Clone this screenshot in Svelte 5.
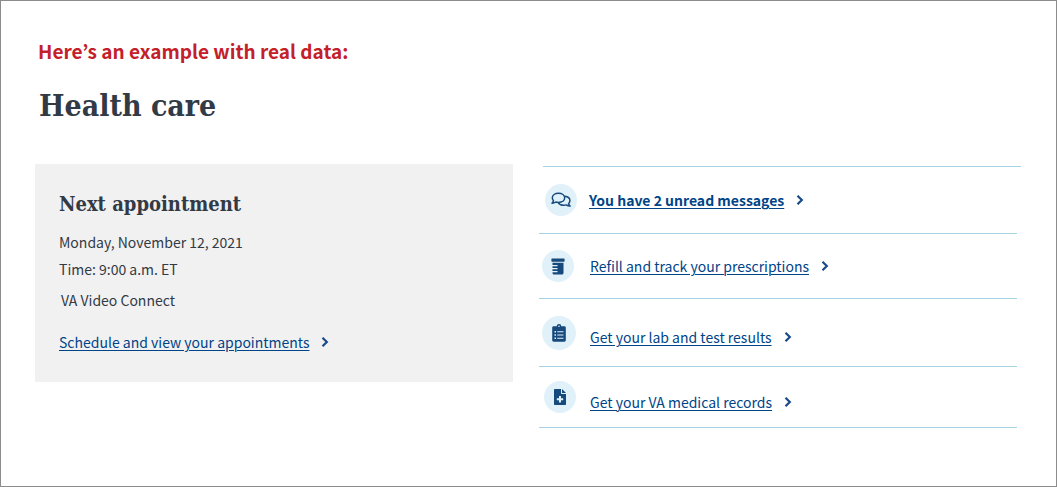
<script>
  const links = [
    { icon: 'messages', label: 'You have 2 unread messages', unread: true },
    { icon: 'prescriptions', label: 'Refill and track your prescriptions' },
    { icon: 'labs', label: 'Get your lab and test results', low: true },
    { icon: 'records', label: 'Get your VA medical records', low: true }
  ];
</script>

{#snippet chevron()}
  <svg class="chevron" viewBox="0 0 8 12" aria-hidden="true">
    <path d="M1.5 1.8 5.8 6 1.5 10.2" fill="none" stroke="currentColor" stroke-width="2.2" />
  </svg>
{/snippet}

<main class="page">
  <p class="intro">Here’s an example with real data:</p>
  <h1>Health care</h1>

  <div class="columns">
    <section class="card">
      <h2>Next appointment</h2>
      <p>Monday, November 12, 2021</p>
      <p>Time: 9:00 a.m. ET</p>
      <p class="place">VA Video Connect</p>
      <div class="action">
        <a href="#appointments">Schedule and view your appointments</a>
        {@render chevron()}
      </div>
    </section>

    <ul class="links">
      {#each links as item}
        <li class={item.icon}>
          <span class="badge">
            {#if item.icon === 'messages'}
              <svg width="20" height="16" viewBox="0 0 20 16" aria-hidden="true">
                <g fill="none" stroke="currentColor" stroke-width="1.5" stroke-linejoin="round">
                  <path d="M7.5 1.2c3.5 0 6.2 2 6.2 4.6s-2.7 4.6-6.2 4.6c-1 0-1.9-.1-2.7-.4-1 .7-2.300 1.100-3.800 1.200.8-.8 1.300-1.600 1.500-2.500-.8-.8-1.200-1.800-1.200-2.900 0-2.600 2.700-4.600 6.200-4.600z" />
                  <path d="M13.8 4.300c3 .3 5.100 2.100 5.100 4.400 0 1.100-.5 2.100-1.300 2.900.2.900.7 1.700 1.500 2.500-1.500-.1-2.800-.5-3.800-1.200-.8.3-1.700.4-2.700.4-2.400 0-4.400-1-5.400-2.700" />
                </g>
              </svg>
            {:else if item.icon === 'prescriptions'}
              <svg width="14" height="17" viewBox="0 0 14 17" aria-hidden="true">
                <path fill="currentColor" d="M1 .5h12c.4 0 .6.2.6.6v2c0 .4-.2.6-.6.6H1c-.4 0-.6-.2-.6-.6v-2C.4.7.6.5 1 .5zM1.500 4.800h11V15c0 .9-.6 1.500-1.500 1.500H3c-.9 0-1.500-.6-1.500-1.500v-.8h5v-1.300h-5v-1.700h5V9.900h-5V8.200h5V6.900h-5z" />
              </svg>
            {:else if item.icon === 'labs'}
              <svg width="14" height="18" viewBox="0 0 14 18" aria-hidden="true">
                <path fill="currentColor" fill-rule="evenodd" d="M1.600 2.300h3.100a2.300 2.300 0 0 1 4.600 0h3.100c.8 0 1.400.6 1.400 1.400v12.600c0 .8-.6 1.400-1.400 1.400H1.600c-.8 0-1.400-.6-1.400-1.400V3.700c0-.8.6-1.400 1.400-1.400zM7 1.500a.8.8 0 1 0 0 1.600.8.8 0 0 0 0-1.600zM2.500 7v1.500H4V7zm2.700.3v1h6.300v-1zM2.500 10.200v1.500H4v-1.500zm2.700.3v1h6.300v-1zM2.500 13.400v1.500H4v-1.500zm2.700.3v1h6.300v-1z" />
              </svg>
            {:else}
              <svg width="12" height="16" viewBox="0 0 12 16" aria-hidden="true">
                <path fill="currentColor" fill-rule="evenodd" d="M.8 0H7v4.200c0 .4.300.8.800.8H12v10.200c0 .5-.3.800-.8.800H.8c-.5 0-.8-.3-.8-.8V.8C0 .3.300 0 .8 0zM5 7v2.200H2.800v2H5v2.200h2v-2.200h2.200v-2H7V7z" />
                <path fill="currentColor" d="M8 0l4 4H8z" />
              </svg>
            {/if}
          </span>
          <span class="text" class:low={item.low}>
            <a href="#{item.icon}" class:unread={item.unread}>{item.label}</a>
            {@render chevron()}
          </span>
        </li>
      {/each}
    </ul>
  </div>
</main>

<style>
  :global(body) {
    margin: 0;
    background: #fff;
  }

  .page {
    box-sizing: border-box;
    min-height: 100vh;
    padding: 36px 39px 32px 34px;
    border: 1px solid #8c8c8c;
    color: #323a45;
    font-family: "Noto Sans CJK KR", "Open Sans", sans-serif;
    font-size: 14px;
    line-height: 24px;
  }

  h1,
  h2,
  p,
  ul {
    margin: 0;
  }

  h1,
  h2 {
    font-family: "DejaVu Serif Condensed", "DejaVu Serif", serif;
    font-weight: 700;
  }

  .intro {
    padding-left: 3px;
    color: #c3202a;
    font-size: 19px;
    font-weight: 700;
    line-height: 28px;
  }

  h1 {
    margin-top: 21px;
    padding-left: 4px;
    font-size: 30px;
    line-height: 40px;
  }

  .columns {
    display: grid;
    grid-template-columns: 1fr 1fr;
    align-items: start;
    gap: 26px;
    margin-top: 38px;
  }

  .card {
    padding: 24px 24px 28px;
    background: #f1f1f1;
  }

  h2 {
    margin-bottom: 10px;
    font-size: 20px;
    line-height: 32px;
  }

  .card p + p {
    margin-top: 3px;
  }

  .card .place {
    margin-top: 7px;
    padding-left: 2px;
  }

  .action {
    display: flex;
    align-items: center;
    gap: 12px;
    margin-top: 18px;
  }

  a {
    color: #004488;
    text-decoration: underline;
    text-decoration-thickness: 1px;
    text-underline-offset: 2px;
  }

  .unread {
    font-weight: 700;
  }

  .chevron {
    flex: none;
    width: 8px;
    height: 12px;
    color: #174a8c;
  }

  .links {
    padding: 2px 0 0;
    list-style: none;
  }

  li {
    display: flex;
    align-items: center;
    gap: 16px;
    box-sizing: border-box;
    min-height: 65px;
    padding-left: 3px;
    border-top: 1px solid #a3d3e4;
  }

  .messages {
    gap: 12px;
    margin: 0 -4px 0 4px;
    padding-left: 2px;
    min-height: 67px;
  }

  .labs {
    min-height: 68px;
    gap: 14px;
  }

  .records {
    min-height: 62px;
    padding-left: 5px;
    gap: 14px;
    border-bottom: 1px solid #a3d3e4;
  }

  .badge {
    display: flex;
    flex: none;
    align-items: center;
    justify-content: center;
    width: 32px;
    height: 32px;
    border-radius: 50%;
    background: #e1f1f9;
    color: #174a7c;
  }

  .labs .badge {
    width: 34px;
    height: 34px;
  }

  .text {
    display: flex;
    align-items: center;
    gap: 12px;
  }

  .low {
    padding-top: 9px;
  }
</style>
